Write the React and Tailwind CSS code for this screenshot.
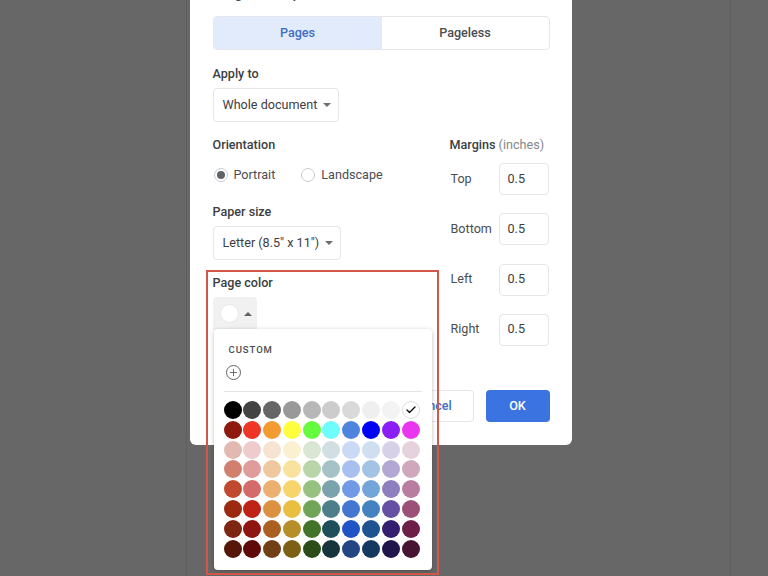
import { Plus, Check } from "lucide-react";

const swatches = [
  ["#000000", "#434343", "#666666", "#999999", "#b7b7b7", "#cccccc", "#d9d9d9", "#efefef", "#f3f3f3", "#ffffff"],
  ["#8c1a0f", "#ee3526", "#f39a30", "#ffff3d", "#66fb3c", "#6ffcfd", "#4f84de", "#0000f5", "#8a1ef5", "#e935ee"],
  ["#e2b9b1", "#eeccce", "#f7e4d0", "#fbf0d0", "#d9e6d4", "#d1dfe2", "#cad9f5", "#cfdff0", "#d7d1e7", "#e6d2dc"],
  ["#d18070", "#e09b9b", "#efc89f", "#f9e29e", "#b8d5aa", "#a5c2c7", "#a7c0f0", "#a2c3e4", "#b3a8d3", "#cfa8bd"],
  ["#c04a2f", "#d46a6a", "#ebaf70", "#f6d56c", "#97c181", "#7ba3ad", "#7199e5", "#73a5d8", "#8d7ec0", "#b87da0"],
  ["#9c2a10", "#bf2217", "#dc9140", "#e9bf42", "#70a559", "#4d7f8b", "#4477d2", "#4582c1", "#6650a3", "#9c5078"],
  ["#7d2713", "#8f1510", "#aa6020", "#b68f2a", "#417428", "#1f4f5a", "#2054c4", "#1e5290", "#341e70", "#6d1f47"],
  ["#561708", "#5f0a08", "#713f14", "#7a6116", "#2c4d1a", "#15343c", "#244583", "#143860", "#21164c", "#471532"],
];

function Label({ children }) {
  return <div className="text-[12.6px] font-medium leading-4 text-[#3c4043]">{children}</div>;
}

function Select({ children, width }) {
  return (
    <div className={`flex h-[34px] items-center rounded border border-[#e4e6e9] pl-[9px] text-[12.6px] text-[#3c4043] ${width}`}>
      {children}
      <span className="ml-[6px] h-0 w-0 border-x-[4px] border-t-[4px] border-x-transparent border-t-[#6b6e72]" />
    </div>
  );
}

function MarginRow({ name }) {
  return (
    <div className="flex h-8 items-center">
      <span className="w-[49px] pl-px text-[12.6px] text-[#4a4d51]">{name}</span>
      <div className="flex h-8 w-[50px] items-center rounded border border-[#e4e6e9] pl-2 text-[12.6px] text-[#3c4043]">0.5</div>
    </div>
  );
}

function Radio({ checked, label }) {
  return (
    <div className="flex items-center gap-[6px] text-[12.6px] text-[#4a4d51]">
      <span className="flex h-[14px] w-[14px] items-center justify-center rounded-full border border-[#c9cbce]">
        {checked && <span className="h-2 w-2 rounded-full bg-[#5f6368]" />}
      </span>
      {label}
    </div>
  );
}

function ColorMenu() {
  return (
    <div className="absolute left-px top-[54px] z-10 h-[241px] w-[218px] rounded bg-white px-[10px] pt-[13px] shadow-[0_1px_4px_rgba(0,0,0,0.25)]">
      <div className="pl-[5px] text-[9.5px] font-medium leading-4 tracking-[0.1em] text-[#4a4d51]">CUSTOM</div>
      <div className="ml-[2px] mt-[5px] flex h-[18px] w-[15px] items-center justify-center">
        <span className="flex h-[15px] w-[15px] items-center justify-center rounded-full border-[1.5px] border-[#5f6368] text-[#5f6368]">
          <Plus size={11} strokeWidth={2} />
        </span>
      </div>
      <div className="mt-[10px] h-px bg-[#e3e4e6]" />
      <div className="mt-[9px] flex flex-col gap-[1.8px]">
        {swatches.map((row, i) => (
          <div key={i} className="flex gap-[1.8px]">
            {row.map((c, j) => (
              <div
                key={j}
                className={`flex h-[18px] w-[18px] items-center justify-center rounded-full ${c === "#ffffff" ? "border border-[#ddd]" : ""}`}
                style={{ backgroundColor: c }}
              >
                {c === "#ffffff" && <Check size={12} strokeWidth={2.5} className="text-black" />}
              </div>
            ))}
          </div>
        ))}
      </div>
    </div>
  );
}

export default function App() {
  return (
    <div className="relative flex h-[576px] w-[768px] justify-center overflow-hidden bg-[#666766] font-['Roboto',sans-serif]">
      <div className="absolute inset-y-0 left-[186px] w-px bg-[#5f5f5f]" />
      <div className="absolute inset-y-0 left-[730px] w-px bg-[#5f5f5f]" />

      <div className="relative ml-[-7px] h-[445px] w-[382px] rounded-b-md bg-white pl-[23px] pr-[22px]">
        <div className="mt-[-20px] h-[20px] text-[18px] leading-[22px] text-[#3c4043]">Page setup</div>

        <div className="mt-[16px] flex h-[34px] w-[337px] overflow-hidden rounded border border-[#e4e6e9] text-[12.6px] font-medium">
          <div className="flex w-[168px] items-center justify-center bg-[#e1ebfb] text-[#3f6fc4]">Pages</div>
          <div className="flex flex-1 items-center justify-center text-[#4a4d51]">Pageless</div>
        </div>

        <div className="mt-4 flex">
          <div className="w-[237px]">
            <Label>Apply to</Label>
            <div className="mt-[6px]"><Select width="w-[126px]">Whole document</Select></div>

            <div className="mt-[15px]"><Label>Orientation</Label></div>
            <div className="mt-[14px] flex h-4 items-center gap-[26px] pl-px">
              <Radio checked label="Portrait" />
              <Radio label="Landscape" />
            </div>

            <div className="mt-[21px]"><Label>Paper size</Label></div>
            <div className="mt-[6px]"><Select width="w-[128px]">Letter (8.5" x 11")</Select></div>

            <div className="relative mt-[15px]">
              <Label>Page color</Label>
              <div className="mt-[6px] flex h-[33px] w-[44px] items-center gap-[5px] rounded-t bg-[#f1f1f1] pl-[7px]">
                <span className="h-[19px] w-[19px] rounded-full border border-[#e8e8e8] bg-white" />
                <span className="h-0 w-0 border-x-[4px] border-b-[4px] border-x-transparent border-b-[#5f6368]" />
              </div>
              <ColorMenu />
            </div>
          </div>

          <div className="flex-1">
            <div className="mt-[71px] text-[12.6px] leading-4 text-[#3c4043]">
              <span className="font-medium">Margins</span> <span className="text-[#84878b]">(inches)</span>
            </div>
            <div className="mt-[10px] flex flex-col gap-[18.3px]">
              <MarginRow name="Top" />
              <MarginRow name="Bottom" />
              <MarginRow name="Left" />
              <MarginRow name="Right" />
            </div>
          </div>
        </div>

        <div className="absolute bottom-[23px] right-[22px] flex gap-3 text-[12.6px] font-medium">
          <div className="flex h-8 w-[82px] items-center justify-center rounded border border-[#e4e6e9] text-[#3f6fc4]">Cancel</div>
          <div className="flex h-8 w-[64px] items-center justify-center rounded bg-[#3b73e0] text-white">OK</div>
        </div>
      </div>

      <div className="pointer-events-none absolute left-[206px] top-[270px] z-20 h-[305px] w-[233px] border-2 border-[#d2574a]" />
    </div>
  );
}
